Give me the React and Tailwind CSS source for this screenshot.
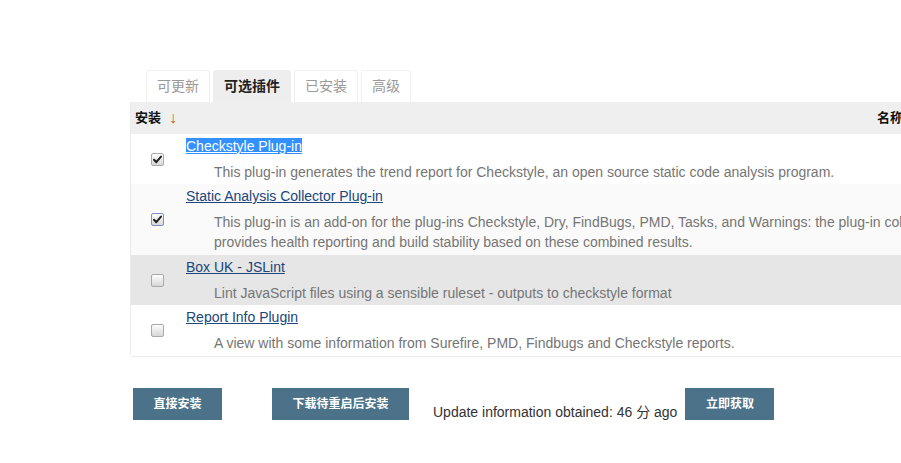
import React from "react";

const font = { fontFamily: '"Liberation Sans", Arial, "Noto Sans CJK SC", sans-serif' };

function Box({ checked, focused }) {
  return (
    <span
      className={`relative inline-block w-[13px] h-[13px] rounded-[2px] border ${focused ? "border-[#7c8fc0]" : "border-[#a9a9a9]"} bg-gradient-to-b from-[#fdfdfd] to-[#d8d8d8]`}
    >
      {checked && (
        <svg viewBox="0 0 13 13" className="absolute left-[-1px] top-[-1px] w-[13px] h-[13px]">
          <path d="M3 6.8 L5.3 9.2 L10 3.6" stroke="#222" strokeWidth="2" fill="none" strokeLinecap="round" strokeLinejoin="round" />
        </svg>
      )}
    </span>
  );
}

function Row({ bg, title, selected, desc, checked, focused, h }) {
  return (
    <div className={`flex ${bg} ${h}`}>
      <div className="w-[55px] shrink-0 flex items-center pl-[20px]">
        <Box checked={checked} focused={focused} />
      </div>
      <div className="pt-[2px] text-[14px] min-w-0">
        <div className="leading-[20px]">
          {selected ? (
            <span className="bg-[#3390ff] text-white underline">{title}</span>
          ) : (
            <span className="text-[#20457a] underline">{title}</span>
          )}
        </div>
        <div className="mt-[6px] pl-[28px] text-[#757575] leading-[20px]">
          {desc.map((d, i) => (
            <div key={i} className="whitespace-nowrap">{d}</div>
          ))}
        </div>
      </div>
    </div>
  );
}

export default function App() {
  return (
    <div className="w-[901px] h-[463px] overflow-hidden bg-white" style={font}>
      <div className="pt-[70px] pl-[130px] w-[1200px]">
        <div className="flex gap-[3px] pl-[16px] text-[14px]">
          <div className="h-[32px] px-[10px] flex items-center border border-b-0 border-[#f0f0f0] rounded-t-[3px] text-[#999]">可更新</div>
          <div className="h-[32px] px-[11px] flex items-center bg-[#eeeeee] rounded-t-[3px] font-bold text-[#222]">可选插件</div>
          <div className="h-[32px] px-[10px] flex items-center border border-b-0 border-[#f0f0f0] rounded-t-[3px] text-[#999]">已安装</div>
          <div className="h-[32px] px-[10px] flex items-center border border-b-0 border-[#f0f0f0] rounded-t-[3px] text-[#999]">高级</div>
        </div>
        <div className="border-l border-b border-[#ececec] rounded-bl-[4px] w-[1000px]">
          <div className="flex items-center h-[32px] bg-[#efefef] text-[13px] font-bold text-[#111]">
            <div className="pl-[4px] w-[746px] shrink-0 flex items-center">
              安装
              <span className="ml-[8px] font-normal text-[#c0661a] text-[16px] leading-none">↓</span>
            </div>
            <div>名称</div>
          </div>
          <Row
            bg="bg-white"
            h="h-[50px]"
            title="Checkstyle Plug-in"
            selected
            checked
            desc={["This plug-in generates the trend report for Checkstyle, an open source static code analysis program."]}
          />
          <Row
            bg="bg-[#fafafa]"
            h="h-[71px]"
            title="Static Analysis Collector Plug-in"
            checked
            focused
            desc={[
              "This plug-in is an add-on for the plug-ins Checkstyle, Dry, FindBugs, PMD, Tasks, and Warnings: the plug-in collects",
              "provides health reporting and build stability based on these combined results.",
            ]}
          />
          <Row
            bg="bg-[#e6e6e6]"
            h="h-[50px]"
            title="Box UK - JSLint"
            desc={["Lint JavaScript files using a sensible ruleset - outputs to checkstyle format"]}
          />
          <Row
            bg="bg-white"
            h="h-[51px]"
            title="Report Info Plugin"
            desc={["A view with some information from Surefire, PMD, Findbugs and Checkstyle reports."]}
          />
        </div>
        <div className="flex items-start mt-[31px] pl-[3px]">
          <button className="h-[32px] w-[89px] bg-[#4b7289] text-white text-[12px] font-bold">直接安装</button>
          <button className="ml-[50px] h-[32px] w-[137px] bg-[#4b7289] text-white text-[12px] font-bold">下载待重启后安装</button>
          <div className="ml-[24px] mt-[15px] text-[14px] text-[#333] leading-[18px]">Update information obtained: 46 分 ago</div>
          <button className="ml-[8px] h-[32px] w-[89px] bg-[#4b7289] text-white text-[12px] font-bold">立即获取</button>
        </div>
      </div>
    </div>
  );
}
